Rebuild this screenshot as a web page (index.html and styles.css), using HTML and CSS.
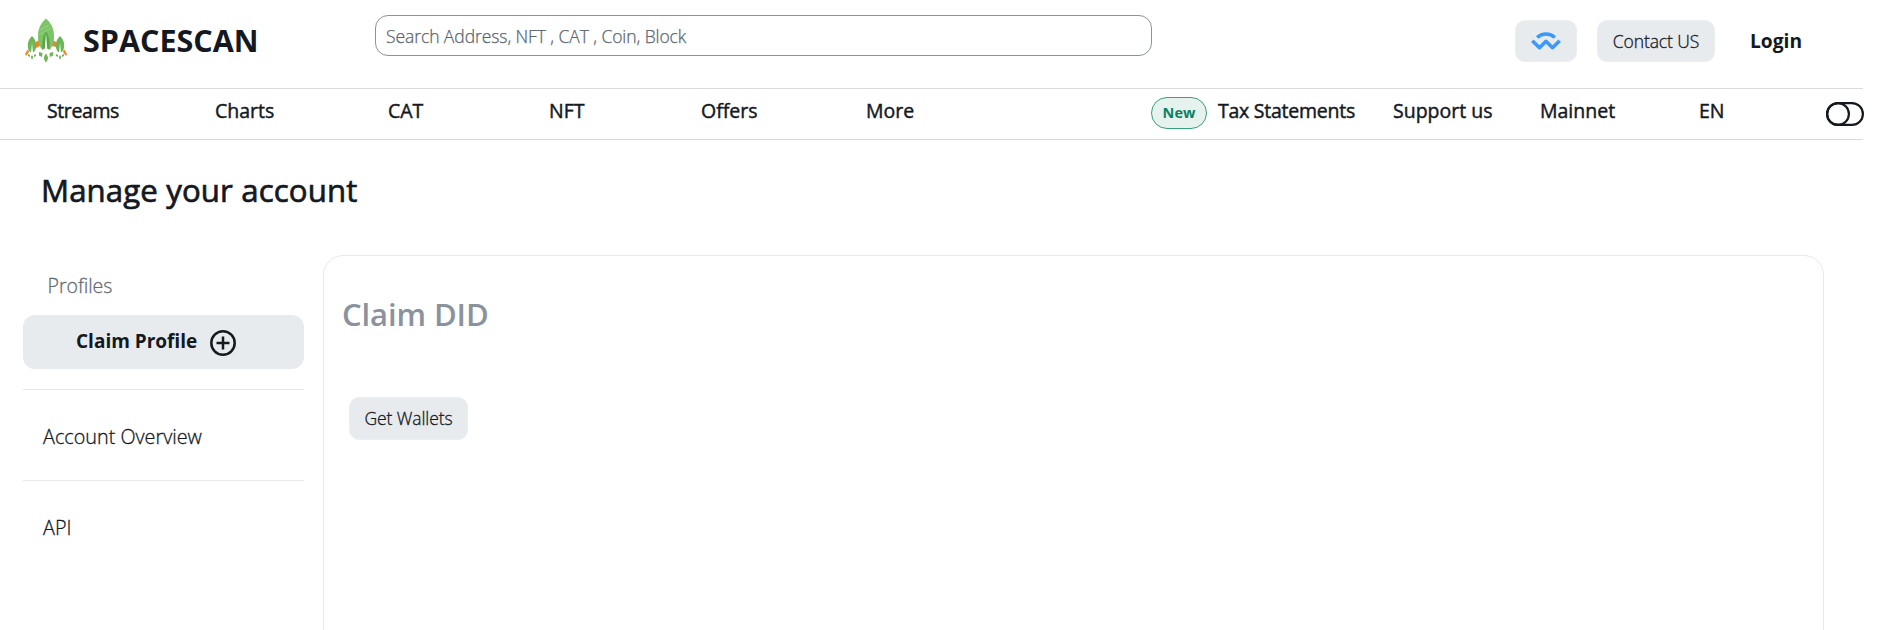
FILE: index.html
```html
<!DOCTYPE html>
<html lang="en">
<head>
<meta charset="utf-8">
<title>Spacescan - Manage your account</title>
<link rel="stylesheet" href="styles.css">
</head>
<body>
<div class="page">
  <header class="topbar">
    <a class="brand">
      <svg class="brand-logo" viewBox="0 0 42 45" width="42" height="45">
        <path d="M11 24l5-3h10l5 3v5l-4-1H15l-4 2zM3 31l-3 5 1 2 3-4zM39 31l3 5-1 2-3-4z" fill="#f5821f"/>
        <path d="M21 .5C16 5 13 10 13 18c0 6 1 10 4.500 14l3.500-2 3.500 2C28 28 29 24 29 18 29 10 26 5 21 .5z" fill="#7dc466"/>
        <path d="M21 13c-3 5-4 10-3.500 18l3.500-1 3.500 1C25 23 24 18 21 13z" fill="#5aa746"/>
        <path d="M14.500 12l10-5M14 17l12-7" stroke="#a0d68f" stroke-width=".8"/>
        <path d="M21 15l1.200 16h-2.400z" fill="#fff"/>
        <path d="M7 18c-3 3-4.200 6-4.200 9 0 3 .7 5 2.200 7h4c1.500-2 2.200-4 2.200-7 0-3-1.200-6-4.200-9zM35 18c-3 3-4.200 6-4.200 9 0 3 .7 5 2.200 7h4c1.500-2 2.200-4 2.200-7 0-3-1.200-6-4.200-9z" fill="#6cb657"/>
        <path d="M7 25l1 10H6zM35 25l1 10h-2z" fill="#fff"/>
        <path d="M21 35.500c2.700 3.500 2.700 5.500 0 9-2.700-3.500-2.700-5.500 0-9zM14 34l3.500 1-.5 4-3-1.500zM28 34l-3.500 1 .5 4 3-1.500zM7 37l1.200 2L7 42l-1.200-3zM35 37l1.200 2-1.200 3-1.200-3zM3 36l2 1v2l-2-1zM11 36l-2 1v2l2-1zM31 36l2 1v2l-2-1zM39 36l-2 1v2l2-1z" fill="#6cb657"/>
      </svg>
      <span class="brand-name">SPACESCAN</span>
    </a>
    <input class="search" type="text" placeholder="Search Address, NFT , CAT , Coin, Block">
    <div class="actions">
      <button class="btn btn-wallet" aria-label="Connect wallet">
        <svg viewBox="0 0 30 19" width="30" height="19" fill="none" stroke="#3b99fc" stroke-width="3.6">
          <path d="M6.200 5.500C11 .8 19 .8 23.800 5.500"/>
          <path d="M1.300 8.700L8.500 15.700 15 9.300 21.500 15.700 28.700 8.700" stroke-linejoin="round"/>
        </svg>
      </button>
      <button class="btn btn-contact">Contact US</button>
      <a class="login">Login</a>
    </div>
  </header>

  <nav class="nav">
    <a class="nav-streams">Streams</a>
    <a class="nav-charts">Charts</a>
    <a class="nav-cat">CAT</a>
    <a class="nav-nft">NFT</a>
    <a class="nav-offers">Offers</a>
    <a class="nav-more">More</a>
    <span class="pill">New</span>
    <a class="nav-tax">Tax Statements</a>
    <a class="nav-support">Support us</a>
    <a class="nav-mainnet">Mainnet</a>
    <a class="nav-lang">EN</a>
    <svg class="toggle" viewBox="0 0 38 24" width="38" height="24" fill="none" stroke="#14191f" stroke-width="2.2">
      <rect x="1.100" y="1.100" width="35.800" height="21.800" rx="10.900"/>
      <circle cx="12" cy="12" r="10.900"/>
    </svg>
  </nav>

  <h1 class="title">Manage your account</h1>

  <main class="content">
    <aside class="sidebar">
      <div class="side-label">Profiles</div>
      <a class="side-active">
        <span>Claim Profile</span>
        <svg viewBox="0 0 26 26" width="26" height="26" fill="none" stroke="#14191f" stroke-width="2.5">
          <circle cx="13" cy="13" r="11.700"/>
          <path d="M13 6.500v13M6.500 13h13"/>
        </svg>
      </a>
      <a class="side-item side-overview">Account Overview</a>
      <a class="side-item side-api">API</a>
    </aside>
    <section class="card">
      <h2 class="card-title">Claim DID</h2>
      <button class="btn btn-get">Get Wallets</button>
    </section>
  </main>
</div>
</body>
</html>
```
FILE: styles.css
```css
* { box-sizing: border-box; }
body {
  margin: 0;
  background: #fff;
  color: #14191f;
  font-family: "Open Sans", "Noto Sans", sans-serif;
  overflow: hidden;
}
.page { height: 630px; overflow: hidden; }
.topbar {
  display: flex;
  width: 1863px;
  height: 89px;
  border-bottom: 1px solid #d9dadb;
}
.brand { display: flex; width: 375px; padding: 18px 0 0 25px; }
.brand-name {
  margin: 0 0 0 16px;
  font-size: 30.500px;
  line-height: 44px;
  font-weight: 700;
}
.search {
  width: 777px;
  height: 41px;
  margin-top: 15px;
  padding: 1px 10px 0;
  border: 1px solid #8a939b;
  border-radius: 13px;
  font: 300 17.500px "Open Sans", "Noto Sans", sans-serif;
  letter-spacing: -.08px;
  outline: 0;
}
.search::placeholder {
  color: #59636d;
  opacity: 1;
  -webkit-text-stroke: .25px #59636d;
}
.actions { display: flex; margin: 20px 0 0 363px; }
.btn {
  display: flex;
  align-items: center;
  justify-content: center;
  height: 42px;
  padding: 0;
  border: 1px solid #eceff1;
  border-radius: 10px;
  background: #e8ebee;
  color: #14191f;
  font: 300 17.500px "Open Sans", "Noto Sans", sans-serif;
  letter-spacing: -.1px;
  -webkit-text-stroke: .3px;
  white-space: nowrap;
}
.btn-wallet { width: 62px; }
.btn-contact { width: 118px; margin-left: 20px; }
.login {
  margin-left: 35px;
  font-size: 19.200px;
  line-height: 42px;
  font-weight: 700;
}
.nav {
  display: grid;
  grid-template-columns: 168px 173px 161px 152px 165px 285px 67px 175px 147px 159px 127px 38px;
  width: 1863px;
  height: 51px;
  padding-left: 47px;
  border-bottom: 1px solid #d9dadb;
  font-size: 19.500px;
  line-height: 44px;
  -webkit-text-stroke: .45px;
  white-space: nowrap;
}
.nav-streams { letter-spacing: -.4px; }
.nav-tax { letter-spacing: -.25px; }
.pill {
  width: 56px;
  height: 32px;
  margin-top: 8px;
  border: 1px solid #38a07c;
  border-radius: 16px;
  background: #e6f2ee;
  color: #0b8160;
  font-size: 14.500px;
  line-height: 29px;
  font-weight: 700;
  text-align: center;
  -webkit-text-stroke: 0;
}
.toggle { margin-top: 13px; }
.title {
  margin: 0;
  padding: 26px 0 0 41px;
  font-size: 31.200px;
  line-height: 48px;
  font-weight: 400;
  letter-spacing: .12px;
  -webkit-text-stroke: .7px;
}
.content { display: flex; padding: 41px 0 0 23px; }
.sidebar { width: 281px; }
.side-label {
  height: 60px;
  padding: 18px 0 0 24.500px;
  color: #626b74;
  font-size: 19.500px;
  line-height: 26px;
  font-weight: 300;
  -webkit-text-stroke: .3px;
}
.side-active {
  display: flex;
  height: 54px;
  padding-left: 53px;
  border-radius: 12px;
  background: #e8ebee;
  font-size: 19px;
  line-height: 52px;
  font-weight: 700;
}
.side-active svg { margin: 15px 0 0 13px; }
.side-item {
  display: block;
  padding: 33px 20px 0;
  border-top: 1px solid #e7e9ea;
  height: 91px;
  font-size: 19.800px;
  line-height: 27px;
  font-weight: 300;
  -webkit-text-stroke: .3px;
}
.side-overview { margin-top: 20px; }
.card {
  width: 1501px;
  height: 420px;
  margin-left: 19px;
  padding: 34px 0 0 18px;
  border: 1px solid #e7e9ea;
  border-radius: 20px;
}
.card-title {
  margin: 0;
  color: #8a939d;
  font-size: 31px;
  line-height: 48px;
  font-weight: 600;
  letter-spacing: -.1px;
}
.btn-get { width: 119px; height: 43px; margin: 59px 0 0 7px; padding-bottom: 1px; }
```
